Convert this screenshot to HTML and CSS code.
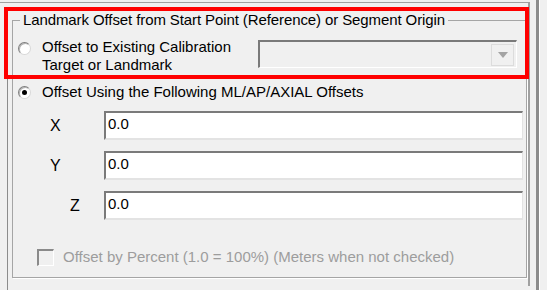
FILE: index.html
```html
<!DOCTYPE html>
<html lang="en">
<head>
    <meta charset="UTF-8">
    <title>Landmark Offset</title>
    <link rel="stylesheet" href="styles.css">
</head>
<body>
    <div class="screen">
        <div class="main">
            <div class="panel">
                <fieldset class="group">
                    <legend>Landmark Offset from Start Point (Reference) or Segment Origin</legend>

                    <!-- Option 1: existing target -->
                    <div class="row-landmark">
                        <label class="option option-top">
                            <span class="radio"></span>
                            <span class="option-text">Offset to Existing Calibration<br>Target or Landmark</span>
                        </label>
                        <div class="combo">
                            <span class="combo-btn">
                                <svg width="10" height="6" viewBox="0 0 10 6"><path d="M0 0H10L5 6Z" fill="#a3a3a3"/></svg>
                            </span>
                        </div>
                    </div>

                    <!-- Option 2: ML/AP/AXIAL -->
                    <label class="option option-checked">
                        <span class="radio checked"></span>
                        <span class="option-text">Offset Using the Following ML/AP/AXIAL Offsets</span>
                    </label>

                    <div class="fields">
                        <div class="field">
                            <span class="axis">X</span>
                            <div class="textbox">0.0</div>
                        </div>
                        <div class="field">
                            <span class="axis">Y</span>
                            <div class="textbox">0.0</div>
                        </div>
                        <div class="field">
                            <span class="axis axis-z">Z</span>
                            <div class="textbox">0.0</div>
                        </div>
                    </div>

                    <label class="check-row">
                        <span class="checkbox"></span>
                        <span class="check-text">Offset by Percent (1.0 = 100%) (Meters when not checked)</span>
                    </label>
                </fieldset>
            </div>
        </div>
        <div class="side"></div>
        <div class="highlight"></div>
    </div>
</body>
</html>
```

FILE: styles.css
```css
* {
    box-sizing: border-box;
}

body {
    margin: 0;
    background: #f0f0f0;
    font-family: "Liberation Sans", Arial, sans-serif;
    font-size: 15px;
    color: #000;
}

.screen {
    position: relative;
    width: 547px;
    height: 290px;
    display: flex;
    overflow: hidden;
}

.main {
    width: 530px;
    height: 284px;
    margin-top: 2px;
    border-top: 1px solid #a0a0a0;
    border-right: 2px solid #a0a0a0;
}

.panel {
    margin-left: 7px;
    height: 281px;
    padding-left: 4px;
    border-left: 1px solid #8c8c8c;
    border-bottom: 2px solid #808080;
}

.group {
    margin: 8px 0 0 0;
    padding: 0 0 0 5px;
    width: 515px;
    height: 267px;
    border: 1px solid #a5a5a5;
    box-shadow: 1px 1px 0 #fff;
}

.group legend {
    margin-left: 2px;
    padding: 0 3px;
    line-height: 18px;
    letter-spacing: -0.1px;
}

.row-landmark {
    display: flex;
    align-items: flex-start;
    margin-top: 9px;
    height: 36px;
}

.option {
    display: flex;
    align-items: center;
    line-height: 18px;
}

.option-top {
    align-items: flex-start;
}

.option-top .radio {
    margin-top: 4px;
}

.option-text {
    margin-left: 11px;
}

.row-landmark .option {
    width: 240px;
}

.radio {
    width: 13px;
    height: 13px;
    border-radius: 50%;
    background: #fff;
    border: 1px solid;
    border-color: #7e7e7e #d8d8d8 #d8d8d8 #7e7e7e;
    box-shadow: inset 1px 1px 0 #b4b4b4;
    position: relative;
    flex: none;
}

.radio.checked::after {
    content: "";
    position: absolute;
    left: 3px;
    top: 3px;
    width: 5px;
    height: 5px;
    border-radius: 50%;
    background: #000;
}

.combo {
    margin-top: 2px;
    width: 259px;
    height: 28px;
    border-top: 2px solid #7a7a7a;
    border-left: 2px solid #7a7a7a;
    border-right: 1px solid #fff;
    border-bottom: 1px solid #fff;
    display: flex;
    justify-content: flex-end;
    align-items: center;
    padding-right: 2px;
}

.combo-btn {
    width: 23px;
    height: 22px;
    border: 1px solid #dcdcdc;
    display: flex;
    align-items: center;
    justify-content: center;
}

.option-checked {
    margin-top: 9px;
}

.fields {
    margin-top: 10px;
    display: flex;
    flex-direction: column;
    gap: 11px;
}

.field {
    display: flex;
    align-items: center;
    height: 29px;
}

.axis {
    width: 86px;
    padding-left: 32px;
    font-size: 16px;
}

.axis-z {
    padding-left: 52px;
}

.textbox {
    width: 419px;
    height: 29px;
    background: #fff;
    border-top: 2px solid #7a7a7a;
    border-left: 2px solid #7a7a7a;
    border-right: 1px solid #e3e3e3;
    border-bottom: 2px solid #e3e3e3;
    padding: 2px 0 0 2px;
    line-height: 18px;
}

.check-row {
    display: flex;
    align-items: center;
    margin-top: 28px;
    padding-left: 19px;
    line-height: 18px;
}

.checkbox {
    width: 17px;
    height: 17px;
    background: #f0f0f0;
    border-top: 2px solid #8a8a8a;
    border-left: 2px solid #8a8a8a;
    border-right: 1px solid #fff;
    border-bottom: 1px solid #fff;
    flex: none;
}

.check-text {
    margin-left: 9px;
    color: #9d9d9d;
}

.side {
    margin-left: 6px;
    width: 3px;
    border-left: 3px solid #8c8c8c;
    box-shadow: 1px 0 0 #fff;
}

.highlight {
    position: absolute;
    left: 4px;
    top: 7px;
    width: 525px;
    height: 72px;
    border: 4px solid #ff0000;
}
```
